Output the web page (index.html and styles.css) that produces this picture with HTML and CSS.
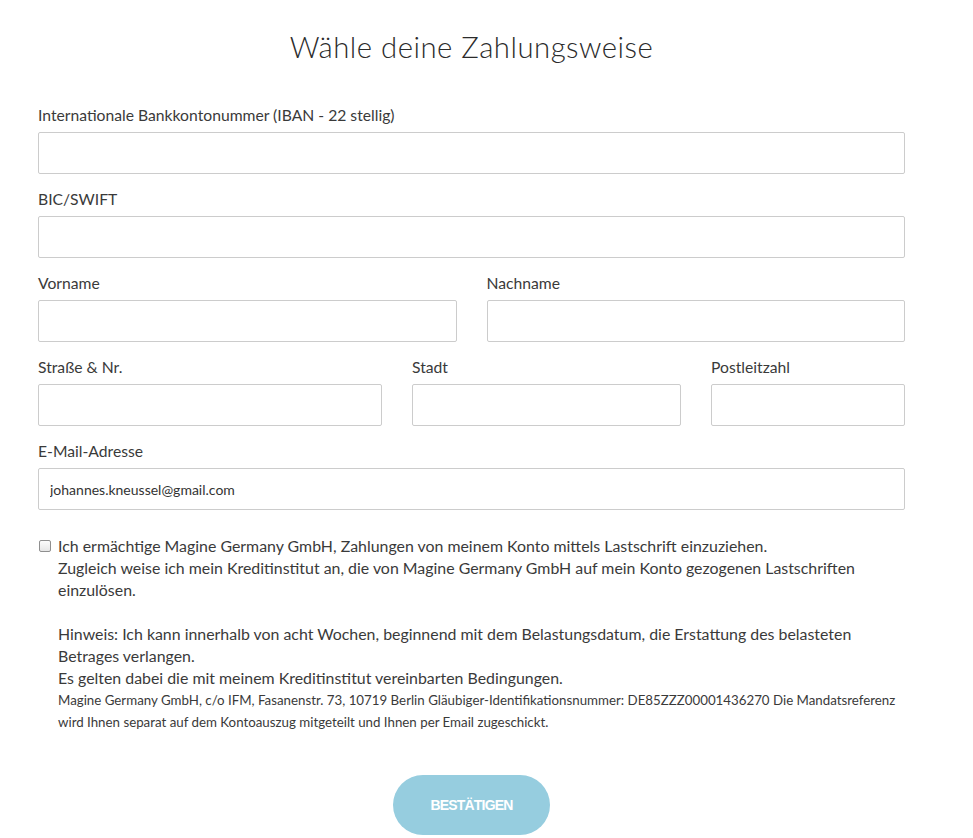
FILE: index.html
```html
<!DOCTYPE html>
<html lang="de">
<head>
<meta charset="utf-8">
<title>Zahlungsweise</title>
<link rel="stylesheet" href="styles.css">
</head>
<body>
<main class="page">
  <h1 class="title">Wähle deine Zahlungsweise</h1>
  <form class="form">
    <div class="field">
      <label class="label">Internationale Bankkontonummer (IBAN - 22 stellig)</label>
      <input class="input" type="text">
    </div>
    <div class="field">
      <label class="label">BIC/SWIFT</label>
      <input class="input" type="text">
    </div>
    <div class="row row-2">
      <div class="field">
        <label class="label">Vorname</label>
        <input class="input" type="text">
      </div>
      <div class="field">
        <label class="label">Nachname</label>
        <input class="input" type="text">
      </div>
    </div>
    <div class="row row-3">
      <div class="field">
        <label class="label">Straße &amp; Nr.</label>
        <input class="input" type="text">
      </div>
      <div class="field">
        <label class="label">Stadt</label>
        <input class="input" type="text">
      </div>
      <div class="field">
        <label class="label">Postleitzahl</label>
        <input class="input" type="text">
      </div>
    </div>
    <div class="field">
      <label class="label">E-Mail-Adresse</label>
      <input class="input input-filled" type="text" value="johannes.kneussel@gmail.com">
    </div>

    <div class="consent">
      <input class="checkbox" type="checkbox">
      <div class="consent-text">
        <p class="para">Ich ermächtige Magine Germany GmbH, Zahlungen von meinem Konto mittels Lastschrift einzuziehen.<br>Zugleich weise ich mein Kreditinstitut an, die von Magine Germany GmbH auf mein Konto gezogenen Lastschriften<br>einzulösen.</p>
        <p class="para">Hinweis: Ich kann innerhalb von acht Wochen, beginnend mit dem Belastungsdatum, die Erstattung des belasteten<br>Betrages verlangen.<br>Es gelten dabei die mit meinem Kreditinstitut vereinbarten Bedingungen.</p>
        <p class="small">Magine Germany GmbH, c/o IFM, Fasanenstr. 73, 10719 Berlin Gläubiger-Identifikationsnummer: DE85ZZZ00001436270 Die Mandatsreferenz<br>wird Ihnen separat auf dem Kontoauszug mitgeteilt und Ihnen per Email zugeschickt.</p>
      </div>
    </div>

    <div class="actions">
      <button class="button" type="button">BESTÄTIGEN</button>
    </div>
  </form>
</main>
</body>
</html>
```
FILE: styles.css
```css
* { box-sizing: border-box; }
html, body { margin: 0; background: #fff; }
body {
  font-family: Lato, "Open Sans", sans-serif;
  color: #333;
}
.page {
  width: 867px;
  margin-left: 38px;
}
.title {
  margin: 30px 0 41px;
  font-size: 29.3px;
  line-height: 34px;
  font-weight: 300;
  text-align: center;
  color: #2b2b2b;
  letter-spacing: 0.5px;
}
.form {
  display: flex;
  flex-direction: column;
  gap: 15px;
}
.field {
  display: flex;
  flex-direction: column;
  min-width: 0;
}
.label {
  font-size: 15.7px;
  line-height: 20px;
  margin-bottom: 7px;
  color: #3a3a3a;
}
.input {
  height: 42px;
  width: 100%;
  border: 1px solid #ccc;
  border-radius: 2px;
  background: #fff;
  padding: 0 11px;
  font-family: Lato, "Open Sans", sans-serif;
  font-size: 14px;
  color: #333;
  outline: none;
}
.row {
  display: grid;
  column-gap: 30px;
}
.row-2 { grid-template-columns: 1fr 1fr; }
.row-3 { grid-template-columns: 344fr 269fr 194fr; }

.consent {
  display: flex;
  align-items: flex-start;
  margin-top: 10px;
}
.checkbox {
  appearance: none;
  -webkit-appearance: none;
  width: 12px;
  height: 12px;
  margin: 5px 7px 0 1px;
  border: 1px solid #8f8f8f;
  border-radius: 2px;
  background: linear-gradient(#fcfcfc, #e6e6e6);
  flex: none;
}
.consent-text {
  flex: 1;
  white-space: nowrap;
}
.para {
  margin: 0 0 22px;
  font-size: 15.9px;
  line-height: 22px;
  color: #3a3a3a;
}
.para + .para { margin-bottom: 0; }
.small {
  margin: 0;
  font-size: 13.3px;
  line-height: 22px;
  color: #3a3a3a;
}
.actions {
  display: flex;
  justify-content: center;
  margin-top: 27px;
}
.button {
  width: 157px;
  height: 60px;
  border: none;
  border-radius: 30px;
  background: #96cddf;
  color: #fff;
  font-family: "Liberation Sans", Arial, sans-serif;
  font-weight: 700;
  font-size: 14px;
  letter-spacing: -0.8px;
}
```
